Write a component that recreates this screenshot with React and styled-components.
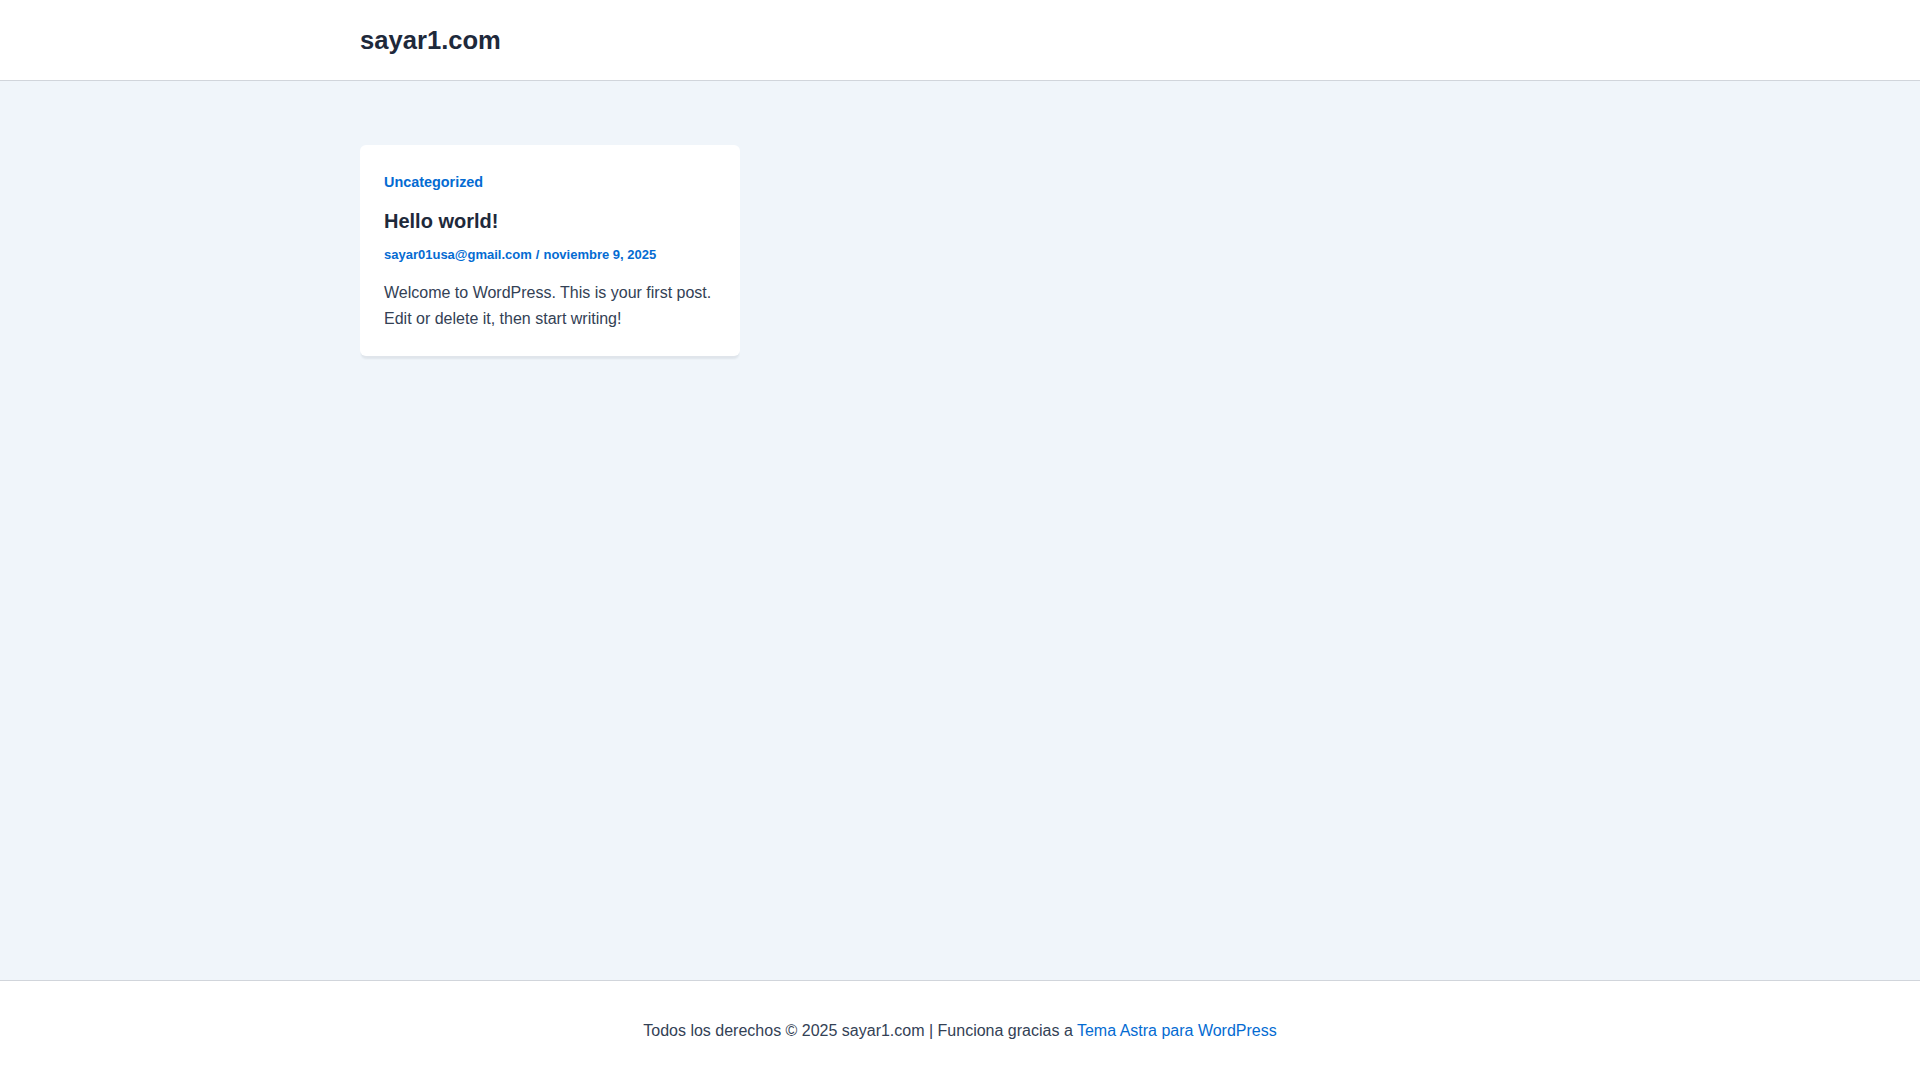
import { createGlobalStyle } from "styled-components";
import styled from "styled-components";

const GlobalStyle = createGlobalStyle`
  html, body {
    margin: 0;
    padding: 0;
  }
  body {
    font-family: "Liberation Sans", Arial, sans-serif;
    color: #334155;
    background: #ffffff;
  }
  a {
    color: #046bd2;
    text-decoration: none;
  }
`;

const Page = styled.div`
  display: flex;
  flex-direction: column;
  min-height: 100vh;
`;

const Header = styled.header`
  height: 80px;
  border-bottom: 1px solid #d1d5db;
  background: #ffffff;
  display: flex;
  justify-content: center;
`;

const Container = styled.div`
  width: 1200px;
  display: flex;
  align-items: ${(p) => p.align || "flex-start"};
`;

const SiteTitle = styled.a`
  font-size: 25.6px;
  font-weight: 700;
  color: #1e293b;
`;

const Main = styled.main`
  flex: 1;
  background: #f0f5fa;
  display: flex;
  justify-content: center;
  padding-top: 64px;
`;

const Grid = styled.div`
  display: grid;
  grid-template-columns: repeat(3, 380px);
  gap: 30px;
  align-content: start;
`;

const Card = styled.article`
  background: #ffffff;
  border-radius: 6px;
  padding: 24px 24px 23px;
  box-shadow: 0px 4px 2px -1px rgba(16, 24, 40, 0.07);
`;

const Category = styled.a`
  display: block;
  font-size: 14.4px;
  font-weight: 700;
  line-height: 23px;
  margin-top: 2px;
`;

const Title = styled.h2`
  margin: 14px 0 0;
  font-size: 20px;
  font-weight: 700;
  line-height: 26px;
  color: #1e293b;
`;

const Meta = styled.div`
  margin-top: 10px;
  font-size: 13px;
  font-weight: 700;
  line-height: 21px;
  color: #046bd2;
`;

const Sep = styled.span`
  margin: 0 4px;
`;

const Excerpt = styled.p`
  margin: 15px 0 0;
  font-size: 16px;
  line-height: 26.4px;
  color: #334155;
`;

const Footer = styled.footer`
  height: 100px;
  border-top: 1px solid #d1d5db;
  background: #ffffff;
  display: flex;
  align-items: center;
  justify-content: center;
  font-size: 16px;
  line-height: 26px;
  color: #334155;
  padding-top: 1px;
  box-sizing: border-box;
`;

export default function App() {
  return (
    <Page>
      <GlobalStyle />
      <Header>
        <Container align="center">
          <SiteTitle href="#">sayar1.com</SiteTitle>
        </Container>
      </Header>

      <Main>
        <Container>
          <Grid>
            <Card>
              <Category href="#">Uncategorized</Category>
              <Title>Hello world!</Title>
              <Meta>
                <a href="#">sayar01usa@gmail.com</a>
                <Sep>/</Sep>
                <a href="#">noviembre 9, 2025</a>
              </Meta>
              <Excerpt>
                Welcome to WordPress. This is your first post. Edit or delete it, then start writing!
              </Excerpt>
            </Card>
          </Grid>
        </Container>
      </Main>

      <Footer>
        <span>
          Todos los derechos © 2025 sayar1.com | Funciona gracias a{" "}
          <a href="#">Tema Astra para WordPress</a>
        </span>
      </Footer>
    </Page>
  );
}
